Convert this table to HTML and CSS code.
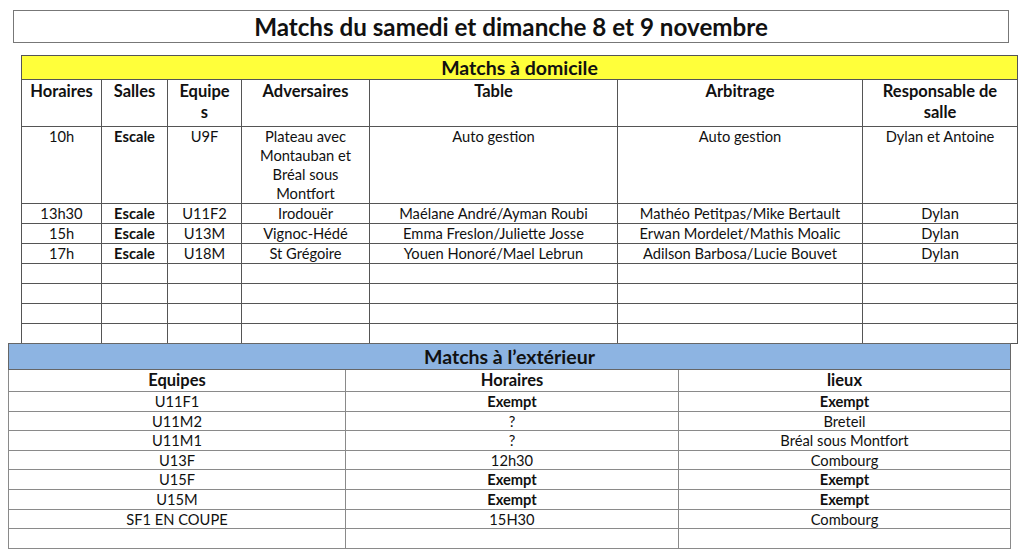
FILE: index.html
```html
<!DOCTYPE html>
<html lang="fr">
<head>
<meta charset="utf-8">
<title>Matchs du samedi et dimanche 8 et 9 novembre</title>
<link rel="stylesheet" href="styles.css">
</head>
<body>
<div class="page">
  <div class="title">Matchs du samedi et dimanche 8 et 9 novembre</div>

  <table class="home">
    <colgroup>
      <col class="c80"><col class="c66"><col class="c74"><col class="c128"><col class="c248"><col class="c245"><col class="c154">
    </colgroup>
    <tr class="band"><td colspan="7">Matchs à domicile</td></tr>
    <tr class="head">
      <th>Horaires</th><th>Salles</th><th>Equipe<br>s</th><th>Adversaires</th><th>Table</th><th>Arbitrage</th><th>Responsable de<br>salle</th>
    </tr>
    <tr class="tall">
      <td>10h</td><td class="b">Escale</td><td>U9F</td><td>Plateau avec<br>Montauban et<br>Bréal sous<br>Montfort</td><td>Auto gestion</td><td>Auto gestion</td><td>Dylan et Antoine</td>
    </tr>
    <tr><td>13h30</td><td class="b">Escale</td><td>U11F2</td><td>Irodouër</td><td>Maélane André/Ayman Roubi</td><td>Mathéo Petitpas/Mike Bertault</td><td>Dylan</td></tr>
    <tr><td>15h</td><td class="b">Escale</td><td>U13M</td><td>Vignoc-Hédé</td><td>Emma Freslon/Juliette Josse</td><td>Erwan Mordelet/Mathis Moalic</td><td>Dylan</td></tr>
    <tr><td>17h</td><td class="b">Escale</td><td>U18M</td><td>St Grégoire</td><td>Youen Honoré/Mael Lebrun</td><td>Adilson Barbosa/Lucie Bouvet</td><td>Dylan</td></tr>
    <tr><td></td><td></td><td></td><td></td><td></td><td></td><td></td></tr>
    <tr><td></td><td></td><td></td><td></td><td></td><td></td><td></td></tr>
    <tr><td></td><td></td><td></td><td></td><td></td><td></td><td></td></tr>
    <tr><td></td><td></td><td></td><td></td><td></td><td></td><td></td></tr>
  </table>

  <table class="away">
    <colgroup><col class="a1"><col class="a2"><col class="a3"></colgroup>
    <tr class="band"><td colspan="3">Matchs à l’extérieur</td></tr>
    <tr class="head"><th>Equipes</th><th>Horaires</th><th>lieux</th></tr>
    <tr><td>U11F1</td><td class="b">Exempt</td><td class="b">Exempt</td></tr>
    <tr><td>U11M2</td><td>?</td><td>Breteil</td></tr>
    <tr><td>U11M1</td><td>?</td><td>Bréal sous Montfort</td></tr>
    <tr><td>U13F</td><td>12h30</td><td>Combourg</td></tr>
    <tr><td>U15F</td><td class="b">Exempt</td><td class="b">Exempt</td></tr>
    <tr><td>U15M</td><td class="b">Exempt</td><td class="b">Exempt</td></tr>
    <tr><td>SF1 EN COUPE</td><td>15H30</td><td>Combourg</td></tr>
    <tr><td></td><td></td><td></td></tr>
  </table>
</div>
</body>
</html>
```

FILE: styles.css
```css
html, body {
  margin: 0;
  padding: 0;
  background: #ffffff;
}

body {
  font-family: Lato, "Liberation Sans", sans-serif;
  color: #111;
  width: 1024px;
  height: 552px;
  overflow: hidden;
}

.page {
  display: flex;
  flex-direction: column;
  align-items: flex-start;
  padding-top: 10px;
}

.title {
  margin-left: 13px;
  width: 994px;
  height: 31px;
  border: 1px solid #777;
  text-align: center;
  font-weight: 700;
  font-size: 24.2px;
  line-height: 31px;
}

table {
  border-collapse: collapse;
  table-layout: fixed;
}

td, th {
  padding: 0 2px;
  text-align: center;
  vertical-align: top;
  font-size: 14.7px;
  line-height: 19px;
  white-space: nowrap;
  overflow: hidden;
}

th {
  font-weight: 700;
  font-size: 16.5px;
}

.b { font-weight: 700; }

/* Home table */
.home {
  margin-top: 12px;
  margin-left: 21px;
  width: 996px;
}
.home td, .home th {
  border: 1px solid #555;
  height: 19px;
}
.home .band td {
  background: #ffff3a;
  font-weight: 700;
  font-size: 19.5px;
  line-height: 23px;
  height: 23px;
  vertical-align: middle;
  padding: 0;
}
.home .head th {
  height: 45px;
  line-height: 21px;
  padding-top: 1px;
}
.home .tall td {
  height: 75px;
}

.c80 { width: 80px; }
.c66 { width: 66px; }
.c74 { width: 74px; }
.c128 { width: 128px; }
.c248 { width: 248px; }
.c245 { width: 245px; }
.c154 { width: 155px; }

/* Away table */
.away {
  margin-top: -1px;
  margin-left: 8px;
  width: 1002px;
}
.away td, .away th {
  border: 1px solid #8a8a8a;
  height: 18.6px;
  line-height: 18.6px;
}
.away .band td {
  background: #8db4e2;
  border-color: #666;
  font-weight: 700;
  font-size: 19.5px;
  line-height: 25px;
  height: 25px;
  vertical-align: middle;
  padding: 0;
}
.away .head th {
  height: 21px;
  line-height: 21px;
}

.a1 { width: 337px; }
.a2 { width: 333px; }
.a3 { width: 332px; }
```
